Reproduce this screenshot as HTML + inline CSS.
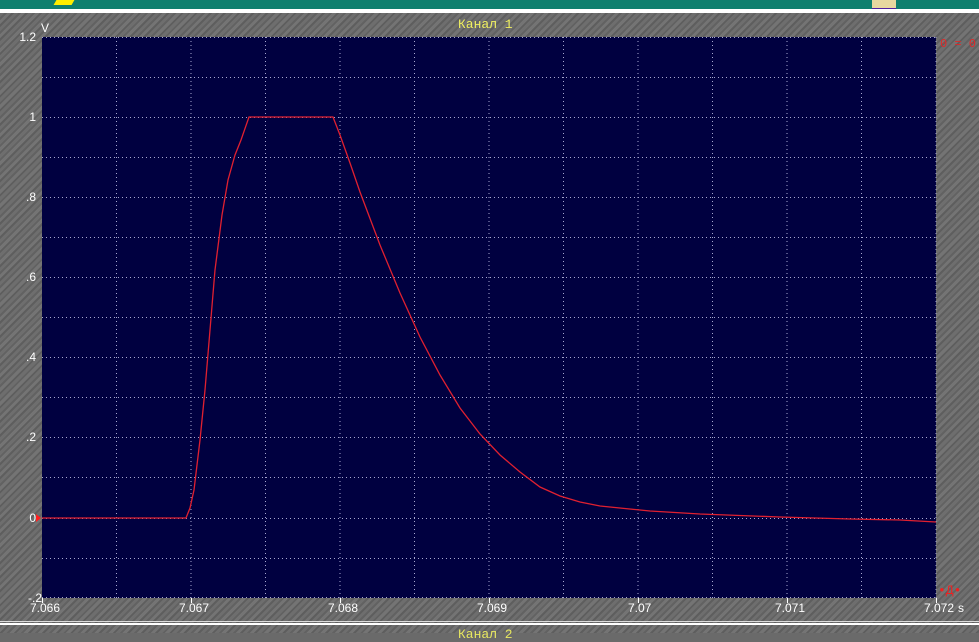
<!DOCTYPE html>
<html><head><meta charset="utf-8"><style>
html,body{margin:0;padding:0}
body{width:979px;height:633px;overflow:hidden;position:relative;background:#6a6a6a;font-family:"Liberation Sans",sans-serif}
.bg{position:absolute;left:0;top:13px;width:979px;height:620px;background:repeating-linear-gradient(135deg,#6e6e6e 0 3px,#626262 3px 5px,#747474 5px 8px,#5e5e5e 8px 10px)}
.top{position:absolute;left:0;top:0;width:979px;height:9px;background:#0f7f6e}
.wl{position:absolute;left:0;top:9px;width:979px;height:4px;background:#fff}
.lbl{position:absolute;color:#fff;font-size:12px;line-height:12px}
</style></head><body>
<div class="bg"></div>
<div class="top"></div>
<div style="position:absolute;left:55px;top:0;width:18px;height:5px;background:#ffee00;transform:skewX(-30deg)"></div>
<div style="position:absolute;left:872px;top:0;width:24px;height:8px;background:#e8d8a0;border-bottom:2px solid #5020a0"></div>
<div class="wl"></div>
<div style="position:absolute;left:0;top:621px;width:979px;height:1px;background:#ddd"></div>
<div style="position:absolute;left:0;top:623px;width:979px;height:2px;background:#fff"></div>
<div style="position:absolute;left:458px;top:628px;color:#e8e860;font-family:'Liberation Mono',monospace;font-size:13px;line-height:13px">Канал 2</div>
<div style="position:absolute;left:458px;top:17px;color:#f0f060;font-family:'Liberation Mono',monospace;font-size:13px">Канал 1</div>
<div class="lbl" style="left:41px;top:22px">V</div>
<div class="lbl" style="left:958px;top:602px">s</div>
<div style="position:absolute;left:940px;top:37px;color:#e02828;font-family:'Liberation Mono',monospace;font-size:12px">0 = 0</div>
<div style="position:absolute;left:938px;top:583px;color:#f02020;font-family:'Liberation Mono',monospace;font-size:13px">•Д•</div>
<div class="lbl" style="right:943px;top:31px">1.2</div>
<div class="lbl" style="right:943px;top:111px">1</div>
<div class="lbl" style="right:943px;top:191px">.8</div>
<div class="lbl" style="right:943px;top:271px">.6</div>
<div class="lbl" style="right:943px;top:351px">.4</div>
<div class="lbl" style="right:943px;top:431px">.2</div>
<div class="lbl" style="right:943px;top:512px">0</div>
<div class="lbl" style="right:937px;top:592px">-.2</div>
<div class="lbl" style="left:30px;top:602px">7.066</div>
<div class="lbl" style="left:179px;top:602px">7.067</div>
<div class="lbl" style="left:328px;top:602px">7.068</div>
<div class="lbl" style="left:477px;top:602px">7.069</div>
<div class="lbl" style="left:628px;top:602px">7.07</div>
<div class="lbl" style="left:775px;top:602px">7.071</div>
<div class="lbl" style="left:924px;top:602px">7.072</div>
<svg style="position:absolute;left:0;top:0" width="979" height="633">
<rect x="42" y="37" width="894" height="561" fill="#000040"/>
<g stroke="#a8a8d0" stroke-width="1" stroke-dasharray="1 3">
<line x1="116.5" y1="37" x2="116.5" y2="598"/><line x1="191" y1="37" x2="191" y2="598"/>
<line x1="265.5" y1="37" x2="265.5" y2="598"/><line x1="340" y1="37" x2="340" y2="598"/>
<line x1="414.5" y1="37" x2="414.5" y2="598"/><line x1="489" y1="37" x2="489" y2="598"/>
<line x1="563.5" y1="37" x2="563.5" y2="598"/><line x1="638" y1="37" x2="638" y2="598"/>
<line x1="712.5" y1="37" x2="712.5" y2="598"/><line x1="787" y1="37" x2="787" y2="598"/>
<line x1="861.5" y1="37" x2="861.5" y2="598"/><line x1="936" y1="37" x2="936" y2="598"/>
<line x1="42" y1="37.5" x2="936" y2="37.5"/><line x1="42" y1="77.5" x2="936" y2="77.5"/>
<line x1="42" y1="117.5" x2="936" y2="117.5"/><line x1="42" y1="157.5" x2="936" y2="157.5"/>
<line x1="42" y1="197.5" x2="936" y2="197.5"/><line x1="42" y1="237.5" x2="936" y2="237.5"/>
<line x1="42" y1="277.5" x2="936" y2="277.5"/><line x1="42" y1="317.5" x2="936" y2="317.5"/>
<line x1="42" y1="357.5" x2="936" y2="357.5"/><line x1="42" y1="397.5" x2="936" y2="397.5"/>
<line x1="42" y1="437.5" x2="936" y2="437.5"/><line x1="42" y1="477.5" x2="936" y2="477.5"/>
<line x1="42" y1="518.5" x2="936" y2="518.5"/><line x1="42" y1="558.5" x2="936" y2="558.5"/>
<line x1="42" y1="597.5" x2="936" y2="597.5"/>
</g>
<g stroke="#fff" stroke-width="1">
<line x1="42.5" y1="598" x2="42.5" y2="603"/><line x1="191.5" y1="598" x2="191.5" y2="603"/>
<line x1="340.5" y1="598" x2="340.5" y2="603"/><line x1="489.5" y1="598" x2="489.5" y2="603"/>
<line x1="638.5" y1="598" x2="638.5" y2="603"/><line x1="787.5" y1="598" x2="787.5" y2="603"/>
<line x1="936.5" y1="598" x2="936.5" y2="603"/>
</g>
<polygon points="36,514 41,518 36,522" fill="#ff2020"/>
<polyline fill="none" stroke="#e02030" stroke-width="1.3" points="42,518 186,518 190,508 194,490 200,440 205,390 210,330 215,270 222,215 228,180 235,155 241,140 249,117 333,117 340,135 350,163 360,192 380,245 400,293 420,337 440,375 460,408 480,434 500,455 520,472 540,487 560,496 580,502 600,506 650,511 700,514 780,517 850,519 900,520 936,522"/>
</svg>
</body></html>
